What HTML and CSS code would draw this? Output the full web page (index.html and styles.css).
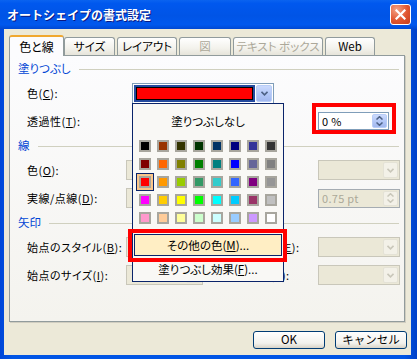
FILE: index.html
```html
<!DOCTYPE html>
<html lang="ja">
<head>
    <meta charset="UTF-8">
    <title>オートシェイプの書式設定</title>
    <link rel="stylesheet" href="styles.css">
</head>
<body>
    <div class="window">
        <div class="titlebar">
            <span class="title">オートシェイプの書式設定</span>
            <span class="close">
                <svg width="11" height="11" viewBox="0 0 11 11"><path d="M1.5 1.5L9.5 9.5M9.5 1.5L1.5 9.5" stroke="#fff" stroke-width="2.2" stroke-linecap="square"/></svg>
            </span>
        </div>

        <div class="client">
            <div class="tabs">
                <div class="tab active">色と線</div>
                <div class="tab">サイズ</div>
                <div class="tab w60">レイアウト</div>
                <div class="tab off w52">図</div>
                <div class="tab off w90">テキスト ボックス</div>
                <div class="tab w50">Web</div>
            </div>

            <div class="panel">
                <div class="sec first"><span>塗りつぶし</span><i></i></div>
                <div class="row">
                    <label>色(<u>C</u>):</label>
                    <div class="combo fill">
                        <div class="value"><span class="red"></span></div>
                        <span class="drop"><svg width="7" height="5" viewBox="0 0 7 5"><path d="M0.5 0.8L3.5 3.8L6.5 0.8" fill="none" stroke="#4d6185" stroke-width="1.6"/></svg></span>
                    </div>
                </div>
                <div class="row">
                    <label>透過性(<u>T</u>):</label>
                    <span></span><span></span>
                    <div class="spin">
                        <span class="text">0 %</span>
                        <span class="arrows">
                            <span><svg width="7" height="4" viewBox="0 0 7 4"><path d="M0.5 3.5L3.5 0.7L6.5 3.5" fill="none" stroke="#4d6185" stroke-width="1.5"/></svg></span>
                            <span><svg width="7" height="4" viewBox="0 0 7 4"><path d="M0.5 0.5L3.5 3.3L6.5 0.5" fill="none" stroke="#4d6185" stroke-width="1.5"/></svg></span>
                        </span>
                    </div>
                </div>

                <div class="sec"><span>線</span><i></i></div>
                <div class="row">
                    <label>色(<u>O</u>):</label>
                    <div class="combo dis"><span class="drop"></span></div>
                    <label class="rlabel">スタイル(<u>S</u>):</label>
                    <div class="combo dis"><span class="drop"><svg width="7" height="5" viewBox="0 0 7 5"><path d="M0.5 0.8L3.5 3.8L6.5 0.8" fill="none" stroke="#c9c7ba" stroke-width="1.6"/></svg></span></div>
                </div>
                <div class="row">
                    <label>実線/点線(<u>D</u>):</label>
                    <div class="combo dis"><span class="drop"></span></div>
                    <label class="rlabel">太さ(<u>W</u>):</label>
                    <div class="spin dis">
                        <span class="text">0.75 pt</span>
                        <span class="arrows">
                            <span><svg width="7" height="4" viewBox="0 0 7 4"><path d="M0.5 3.5L3.5 0.7L6.5 3.5" fill="none" stroke="#c9c7ba" stroke-width="1.5"/></svg></span>
                            <span><svg width="7" height="4" viewBox="0 0 7 4"><path d="M0.5 0.5L3.5 3.3L6.5 0.5" fill="none" stroke="#c9c7ba" stroke-width="1.5"/></svg></span>
                        </span>
                    </div>
                </div>

                <div class="sec"><span>矢印</span><i></i></div>
                <div class="row">
                    <label>始点のスタイル(<u>B</u>):</label>
                    <div class="combo dis"><span class="drop"></span></div>
                    <label class="rlabel">終点のスタイル(<u>E</u>):</label>
                    <div class="combo dis"><span class="drop"><svg width="7" height="5" viewBox="0 0 7 5"><path d="M0.5 0.8L3.5 3.8L6.5 0.8" fill="none" stroke="#c9c7ba" stroke-width="1.6"/></svg></span></div>
                </div>
                <div class="row">
                    <label>始点のサイズ(<u>I</u>):</label>
                    <div class="combo dis"><span class="drop"></span></div>
                    <label class="rlabel">終点のサイズ(<u>Z</u>):</label>
                    <div class="combo dis"><span class="drop"><svg width="7" height="5" viewBox="0 0 7 5"><path d="M0.5 0.8L3.5 3.8L6.5 0.8" fill="none" stroke="#c9c7ba" stroke-width="1.6"/></svg></span></div>
                </div>
            </div>

            <div class="buttons">
                <button class="btn">OK</button>
                <button class="btn">キャンセル</button>
            </div>
        </div>

        <!-- ドロップダウンのカラーパレット -->
        <div class="popup">
            <div class="nofill">塗りつぶしなし</div>
            <div class="palette" id="palette"></div>
            <div class="more">その他の色(<u>M</u>)...</div>
            <div class="effect">塗りつぶし効果(<u>F</u>)...</div>
        </div>

        <div class="mark mark-spin"></div>
        <div class="mark mark-more"></div>
    </div>

    <script>
        // Office の標準 40 色
        const colors = [
            '#000000', '#993300', '#333300', '#003300', '#003366', '#000080', '#333399', '#333333',
            '#800000', '#ff6600', '#808000', '#008000', '#008080', '#0000ff', '#666699', '#808080',
            '#ff0000', '#ff9900', '#99cc00', '#339966', '#33cccc', '#3366ff', '#800080', '#969696',
            '#ff00ff', '#ffcc00', '#ffff00', '#00ff00', '#00ffff', '#00ccff', '#993366', '#c0c0c0',
            '#ff99cc', '#ffcc99', '#ffff99', '#ccffcc', '#ccffff', '#99ccff', '#cc99ff', '#ffffff'
        ];

        const palette = document.getElementById('palette');
        colors.forEach((c, i) => {
            const cell = document.createElement('div');
            cell.className = i === 16 ? 'cell selected' : 'cell';
            const sw = document.createElement('span');
            sw.className = 'sw';
            sw.style.background = c;
            cell.appendChild(sw);
            palette.appendChild(cell);
        });
    </script>
</body>
</html>
```

FILE: styles.css
```css
* {
    margin: 0;
    padding: 0;
    box-sizing: border-box;
}

body {
    font-family: "Noto Sans CJK JP", "Liberation Sans", sans-serif;
    font-size: 11px;
    font-feature-settings: "palt";
    color: #000;
    background: #fff;
}

u {
    text-decoration: underline;
    text-underline-offset: 1px;
}

.window {
    position: relative;
    width: 417px;
    height: 359px;
    display: flex;
    flex-direction: column;
    background: linear-gradient(90deg, #0046d8, #0055e5 3%, #0055e5 97%, #0040c8);
    overflow: hidden;
}

.titlebar {
    flex: none;
    height: 29px;
    display: flex;
    align-items: center;
    padding: 0 6px 0 7px;
    background: linear-gradient(#0a63f0 0%, #0058ee 12%, #0054e6 55%, #0058ee 85%, #0048d2 100%);
}

.title {
    flex: 1;
    color: #fff;
    font-size: 12px;
    font-weight: bold;
    font-feature-settings: normal;
    text-shadow: 1px 1px 0 #0a1883;
    line-height: 1;
}

.close {
    width: 21px;
    height: 21px;
    border: 1px solid #fff;
    border-radius: 3px;
    display: flex;
    align-items: center;
    justify-content: center;
    background: radial-gradient(circle at 30% 25%, #f4a285, #e0552f 55%, #c53c1b);
}

.client {
    flex: 1;
    margin: 0 6px 4px 4px;
    padding: 6px 0 0 5px;
    background: #ece9d8;
    display: flex;
    flex-direction: column;
}

/* タブ */
.tabs {
    height: 20px;
    display: flex;
    align-items: flex-end;
    gap: 2px;
    padding-left: 2px;
    position: relative;
    z-index: 2;
}

.tab {
    width: 51px;
    height: 18px;
    border: 1px solid #919b9c;
    border-bottom: none;
    border-radius: 3px 3px 0 0;
    background: linear-gradient(#ffffff, #f3f2ec 60%, #e6e4da);
    display: flex;
    align-items: center;
    justify-content: center;
    line-height: 1;
    padding-top: 1px;
    font-size: 11.5px;
}

.tab.active {
    width: 55px;
    height: 21px;
    margin: 0 -2px -1px -2px;
    border-top: 2px solid #f0a830;
    background: #fcfcfe;
    font-size: 12px;
}

.tab.off {
    color: #aca899;
}

.w60 { width: 60px; }
.w52 { width: 52px; }
.w90 { width: 90px; }
.w50 { width: 50px; }

/* パネル */
.panel {
    width: 396px;
    height: 267px;
    border: 1px solid #919b9c;
    box-shadow: 1px 1px 0 #d0cdc0;
    background: linear-gradient(#fcfcfe, #f4f3ee);
    padding-top: 6px;
}

.sec {
    height: 14px;
    display: flex;
    align-items: center;
    padding-left: 8px;
    margin-top: 7px;
    color: #0046d5;
    line-height: 1;
    font-size: 11.5px;
}

.sec.first {
    margin-top: 0;
}

.sec i {
    flex: 1;
    height: 1px;
    margin: 0 5px 0 8px;
    background: #d0d0bf;
}

.row {
    height: 22px;
    margin-top: 6px;
    padding-left: 17px;
    display: grid;
    grid-template-columns: 99px 77px 115px 82px;
    align-items: center;
    line-height: 1;
}

.row label {
    white-space: nowrap;
    letter-spacing: 0.5px;
}

/* コンボボックス */
.combo {
    height: 21px;
    border: 1px solid #7f9db9;
    display: flex;
    background: #fff;
}

.combo.fill {
    grid-column: 2 / 5;
    width: 142px;
    margin-left: 6px;
    padding: 1px;
}

.combo .value {
    flex: 1;
    padding: 2px;
    background: #244a9e;
    display: flex;
}

.combo .red {
    flex: 1;
    border: 1px solid #000;
    background: #f00;
}

.drop {
    width: 16px;
    display: flex;
    align-items: center;
    justify-content: center;
    border: 1px solid #b9cdf7;
    border-radius: 2px;
    background: linear-gradient(#cbdafd, #b4c8f7 50%, #a2b8ef);
}

.combo.fill .drop {
    margin-left: 1px;
}

.combo.dis {
    height: 20px;
    border-color: #c9c7ba;
    background: #ebe8d7;
    justify-content: flex-end;
    padding: 1px;
}

.combo.dis .drop {
    width: 15px;
    border-color: #e4e2d6;
    background: #f3f1e8;
}

.row .rlabel {
    padding-left: 2px;
}

/* スピンボックス */
.spin {
    grid-column: 4;
    width: 71px;
    height: 18px;
    border: 1px solid #7f9db9;
    background: #fff;
    display: flex;
    align-items: stretch;
    padding: 1px;
}

.spin .text {
    flex: 1;
    display: flex;
    align-items: center;
    padding-left: 2px;
    letter-spacing: 0.3px;
}

.spin .arrows {
    width: 15px;
    display: flex;
    flex-direction: column;
    border-radius: 2px;
    background: linear-gradient(#cbdafd, #b4c8f7 50%, #a2b8ef);
    border: 1px solid #b9cdf7;
}

.spin .arrows span {
    flex: 1;
    display: flex;
    align-items: center;
    justify-content: center;
}

.spin.dis {
    width: 82px;
    height: 19px;
    border-color: #a5acb2;
    background: #ebe8d7;
    color: #aca899;
}

.spin.dis .arrows {
    border-color: #e4e2d6;
    background: #f3f1e8;
}

/* ボタン */
.buttons {
    margin-top: 9px;
    padding-right: 4px;
    display: flex;
    justify-content: flex-end;
    gap: 10px;
}

.btn {
    width: 72px;
    height: 18px;
    border: 1px solid #003c74;
    border-radius: 3px;
    background: linear-gradient(#ffffff, #f2f1ec 70%, #d8d3c7);
    font-family: inherit;
    font-size: 11.5px;
    line-height: 1;
    color: #000;
}

/* カラーパレット */
.popup {
    position: absolute;
    left: 132px;
    top: 103px;
    width: 152px;
    height: 179px;
    border: 1px solid #0a246a;
    background: #f9f8f5;
    z-index: 5;
}

.nofill {
    height: 33px;
    display: flex;
    align-items: center;
    justify-content: center;
    font-size: 11.5px;
    padding-top: 1px;
}

.palette {
    display: grid;
    grid-template-columns: repeat(8, 18px);
    grid-auto-rows: 18px;
    padding-left: 3px;
}

.cell {
    display: flex;
    align-items: center;
    justify-content: center;
}

.cell.selected {
    border: 1px solid #0a246a;
    background: #fbc68a;
}

.sw {
    width: 12px;
    height: 12px;
    border: 2px solid #a8a69e;
}

.more {
    height: 22px;
    margin: 7px 1px 0 1px;
    border: 1px solid #0a246a;
    background: #ffeec4;
    display: flex;
    align-items: center;
    justify-content: center;
    font-size: 11.5px;
}

.effect {
    height: 24px;
    margin-top: 1px;
    display: flex;
    align-items: center;
    justify-content: center;
    font-size: 11.5px;
}

/* 強調の赤枠 */
.mark {
    position: absolute;
    border: 4px solid #f00;
    z-index: 6;
}

.mark-spin {
    left: 312px;
    top: 103px;
    width: 84px;
    height: 31px;
}

.mark-more {
    left: 128px;
    top: 229px;
    width: 159px;
    height: 33px;
}
```
